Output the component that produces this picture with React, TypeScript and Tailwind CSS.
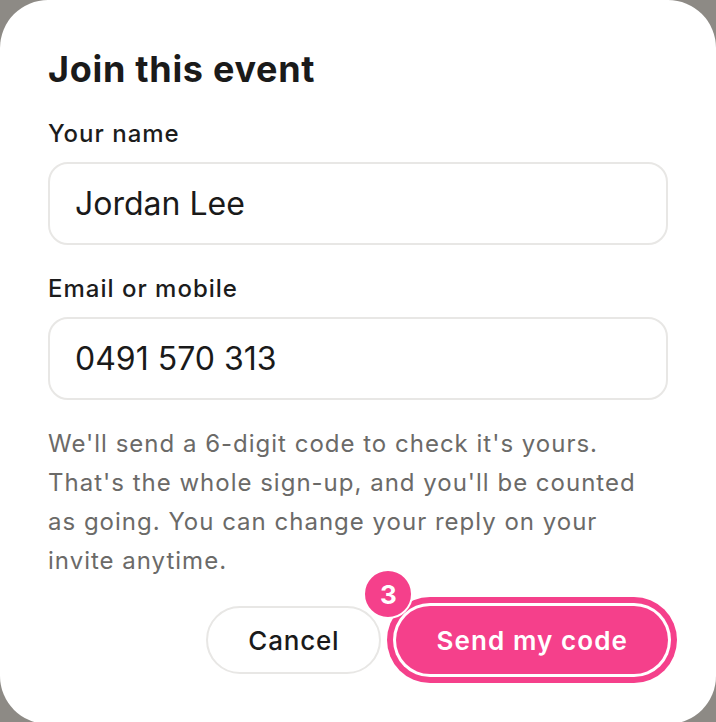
import React from 'react';

const font = { fontFamily: 'Inter, "Noto Sans", sans-serif' };

function Field({ label, value, className = '' }: { label: string; value: string; className?: string }) {
  return (
    <div className={className}>
      <label className="block text-[24px] leading-[32px] font-medium tracking-[1px] text-[#1c1c1c]">{label}</label>
      <div className="mt-3 h-[83px] rounded-[20px] border-2 border-[#e8e7e5] bg-white flex items-center px-[25px]">
        <span className="text-[32px] leading-[40px] text-[#1a1a1a]">{value}</span>
      </div>
    </div>
  );
}

export default function App() {
  return (
    <div className="h-screen overflow-hidden bg-[#8d8a85]" style={font}>
      <div className="h-[724px] rounded-[48px] bg-white px-12 pt-[47px]">
        <h1 className="text-[36px] leading-[44px] font-bold tracking-[0.7px] text-[#1a1a1a]">Join this event</h1>

        <Field label="Your name" value="Jordan Lee" className="mt-[27px]" />
        <Field label="Email or mobile" value="0491 570 313" className="mt-7" />

        <p className="mt-6 max-w-[600px] text-[24px] leading-[39px] tracking-[1px] text-[#6b6a68]">
          We'll send a 6-digit code to check it's yours. That's the whole sign-up, and you'll be counted as going. You can change your reply on your invite anytime.
        </p>

        <div className="mt-[26px] flex justify-end gap-[15px]">
          <button className="h-[68px] px-10 rounded-full border-2 border-[#e8e7e5] bg-white text-[26px] font-medium tracking-[0.8px] text-[#1a1a1a]">
            Cancel
          </button>
          <div className="relative">
            <button className="h-[68px] px-10 rounded-full bg-[#f5408b] text-[26px] font-semibold tracking-[1.1px] text-white ring-[6px] ring-[#f5408b] ring-offset-[3px] ring-offset-white">
              Send my code
            </button>
            <span className="absolute -left-[33px] -top-[37px] w-[50px] h-[50px] rounded-full bg-[#f5408b] border-2 border-white flex items-center justify-center text-[26px] font-bold text-white">
              3
            </span>
          </div>
        </div>
      </div>
    </div>
  );
}
